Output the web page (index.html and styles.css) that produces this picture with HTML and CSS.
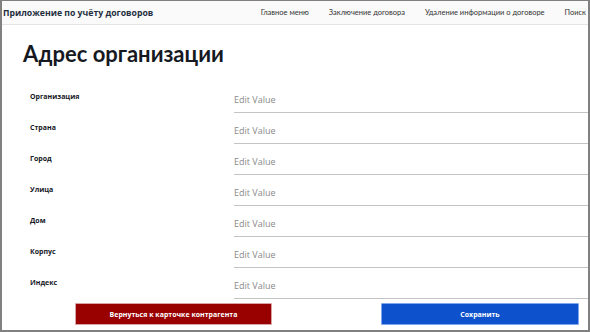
FILE: index.html
```html
<!DOCTYPE html>
<html lang="ru">
<head>
    <meta charset="UTF-8">
    <meta name="viewport" content="width=device-width, initial-scale=1.0">
    <title>Адрес организации</title>
    <link rel="stylesheet" href="styles.css">
</head>
<body>
    <div class="frame">
        <div class="topbar">
            <span class="app-title">Приложение по учёту договоров</span>
            <nav class="menu">
                <a href="#">Главное меню</a>
                <a href="#">Заключение договора</a>
                <a href="#">Удаление информации о договоре</a>
                <a href="#">Поиск</a>
            </nav>
        </div>

        <h1>Адрес организации</h1>

        <div class="form">
            <div class="row"><label>Организация</label><input type="text" placeholder="Edit Value"></div>
            <div class="row"><label>Страна</label><input type="text" placeholder="Edit Value"></div>
            <div class="row"><label>Город</label><input type="text" placeholder="Edit Value"></div>
            <div class="row"><label>Улица</label><input type="text" placeholder="Edit Value"></div>
            <div class="row"><label>Дом</label><input type="text" placeholder="Edit Value"></div>
            <div class="row"><label>Корпус</label><input type="text" placeholder="Edit Value"></div>
            <div class="row"><label>Индекс</label><input type="text" placeholder="Edit Value"></div>
        </div>

        <div class="actions">
            <button class="btn back">Вернуться к карточке контрагента</button>
            <button class="btn save">Сохранить</button>
        </div>
    </div>
</body>
</html>
```

FILE: styles.css
```css
body {
    margin: 0;
    font-family: "Open Sans", Arial, sans-serif;
    background: white;
}

.frame {
    box-sizing: border-box;
    width: 590px;
    height: 332px;
    border: 2px solid #808080;
    border-top-width: 1px;
    overflow: hidden;
}

.topbar {
    display: flex;
    align-items: center;
    justify-content: space-between;
    height: 23px;
    padding: 0 2px 0 1px;
    background: #fafafa;
    border-bottom: 1px solid #e4e4e4;
}

.app-title {
    font-size: 8.7px;
    font-weight: 700;
    color: #232f3e;
}

.menu {
    display: flex;
    gap: 20px;
}

.menu a {
    font-family: Lato, "Open Sans", sans-serif;
    font-size: 7.5px;
    color: #333;
    text-decoration: none;
}

h1 {
    margin: 14px 0 0 21px;
    font-family: Lato, "Open Sans", sans-serif;
    font-size: 22px;
    line-height: 30px;
    font-weight: 700;
    color: #16191f;
}

.form {
    margin-top: 13px;
}

.row {
    display: grid;
    grid-template-columns: 204px 1fr;
    height: 31px;
    padding-left: 28px;
}

.row label {
    padding-top: 10px;
    font-size: 7px;
    font-weight: 700;
    color: #16191f;
}

.row input {
    box-sizing: border-box;
    width: 100%;
    height: 31px;
    margin: 0;
    padding: 5px 0 0 0;
    border: none;
    border-bottom: 1px solid #c4c4c4;
    font-family: "Open Sans", Arial, sans-serif;
    font-size: 9px;
    color: #333;
    outline: none;
}

.row input::placeholder {
    color: #8a8a8a;
}

.actions {
    display: flex;
    justify-content: space-between;
    margin-top: 4px;
    padding: 0 9px 0 73px;
}

.btn {
    width: 197px;
    height: 22px;
    font-family: "Open Sans", Arial, sans-serif;
    font-size: 7px;
    font-weight: 700;
    color: white;
    border-radius: 1px;
    cursor: pointer;
}

.back {
    background: #990000;
    border: 1px solid #d9a3a3;
}

.save {
    width: 198px;
    background: #0d52cc;
    border: 1px solid #7ea6ec;
}
```
